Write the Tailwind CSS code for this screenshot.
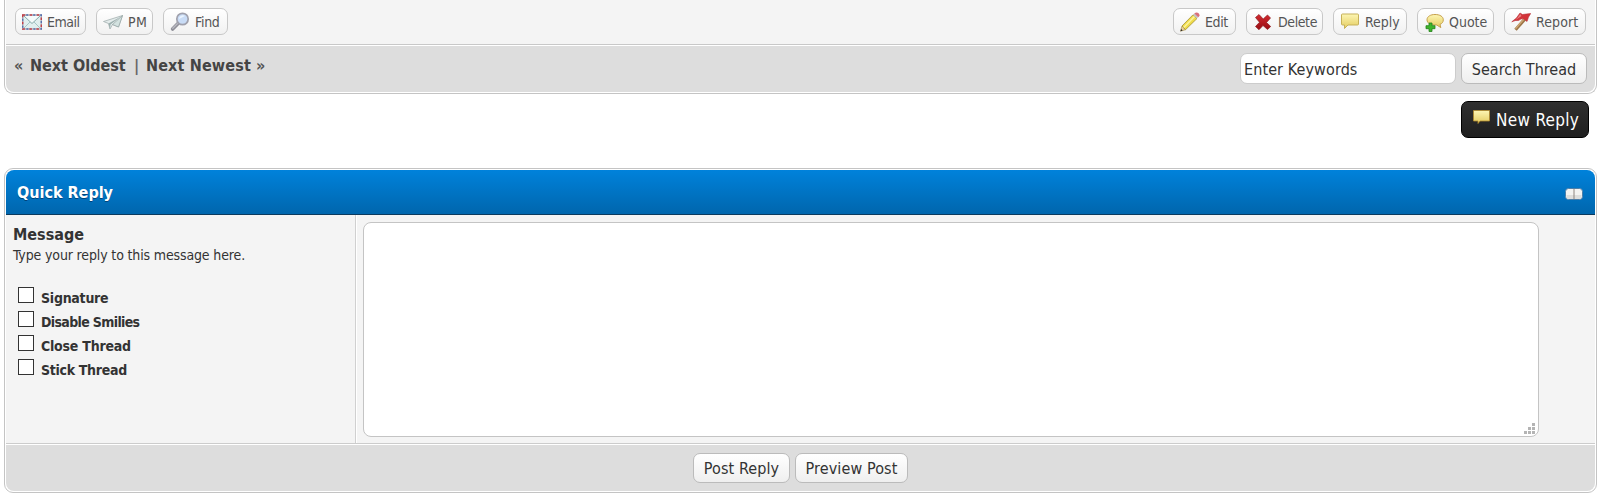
<!DOCTYPE html>
<html lang="en">
<head>
<meta charset="utf-8">
<title>Quick Reply</title>
<script src="https://cdn.jsdelivr.net/npm/@tailwindcss/browser@4"></script>
</head>
<body class="h-[502px] w-[1604px] overflow-hidden bg-white font-['DejaVu_Sans_Condensed','Noto_Sans',sans-serif] text-[#333]">
<svg width="0" height="0" class="absolute">
  <defs>
    <linearGradient id="yel" x1="0" y1="0" x2="0" y2="1"><stop offset="0" stop-color="#fdf6b4"/><stop offset="1" stop-color="#e3cb5e"/></linearGradient>
    <linearGradient id="red" x1="0" y1="0" x2="0" y2="1"><stop offset="0" stop-color="#d42a2f"/><stop offset="1" stop-color="#970d14"/></linearGradient>
  </defs>
</svg>

<!-- Post footer -->
<section class="ml-1 h-[94px] w-[1593px] rounded-b-[9px] border border-t-0 border-[#c4c4c4] bg-white px-px pb-px">
  <div class="flex h-[44px] justify-between bg-[#f4f4f4] px-[9px] pt-2 text-[14px] text-[#555]">
    <div class="flex gap-[10px]">
      <a class="flex h-[27px] w-[71px] items-center gap-[5px] whitespace-nowrap rounded-[7px] border border-[#c8c8c8] bg-linear-to-b from-white to-[#f1f1f1] pl-[6px] tracking-[-0.5px]">
        <svg class="h-5 w-5 shrink-0" viewBox="0 0 20 20"><rect x=".7" y="3" width="18.600" height="14" fill="#e0efef" stroke="#a9adba" stroke-width="1.400"/><rect x=".7" y="3" width="18.600" height="14" fill="none" stroke="#c43f47" stroke-width="1.400" stroke-dasharray="2.5 4.500"/><rect x=".7" y="3" width="18.600" height="14" fill="none" stroke="#5570ad" stroke-width="1.400" stroke-dasharray="2 5" stroke-dashoffset="-3.5"/><path d="M2 16l6-6M18 16l-6-6" stroke="#a5c5c5" fill="none"/><path d="M2 4l8 7.500L18 4" fill="#f5fbfb" stroke="#86aaaa"/></svg><span class="pt-px">Email</span></a>
      <a class="flex h-[27px] w-[57px] items-center gap-[5px] whitespace-nowrap rounded-[7px] border border-[#c8c8c8] bg-linear-to-b from-white to-[#f1f1f1] pl-[6px] tracking-[0.3px]">
        <svg class="h-5 w-5 shrink-0" viewBox="0 0 20 20"><path d="M.5 9.500L19.500 3.500L15.500 15L9.500 12.500L7 17L5.500 11.500z" fill="#e4ecec" stroke="#a3b0b0" stroke-width=".8" stroke-linejoin="round"/><path d="M5.500 11.500L18 4.500L7.500 12.500L7 17z" fill="#9db0af"/><path d="M9.500 12.500L19.500 3.500L15.500 15z" fill="#d3e2e0" stroke="#8b9b9b" stroke-width=".6"/></svg><span class="pt-px">PM</span></a>
      <a class="flex h-[27px] w-[65px] items-center gap-[5px] whitespace-nowrap rounded-[7px] border border-[#c8c8c8] bg-linear-to-b from-white to-[#f1f1f1] pl-[6px] tracking-[-0.3px]">
        <svg class="h-5 w-5 shrink-0" viewBox="0 0 20 20"><path d="M8 11.500L2.600 17" stroke="#8f8f98" stroke-width="3.600" stroke-linecap="round"/><path d="M7.500 11.500L2.800 16.200" stroke="#b9b9c1" stroke-width="1.400" stroke-linecap="round"/><circle cx="12.500" cy="7" r="5.700" fill="#c9dcf6" stroke="#a0a1ad" stroke-width="1.700"/><path d="M9 7a3.800 3.800 0 0 1 6-3z" fill="#eaf4ff"/></svg><span class="pt-px">Find</span></a>
    </div>
    <div class="flex gap-[10px]">
      <a class="flex h-[27px] w-[63px] items-center gap-[5px] whitespace-nowrap rounded-[7px] border border-[#c8c8c8] bg-linear-to-b from-white to-[#f1f1f1] pl-[6px] tracking-[-0.4px]">
        <svg class="h-5 w-5 shrink-0" viewBox="0 0 20 20"><path d="M.5 19.200L2 14L5.500 17.700z" fill="#e8cfa0" stroke="#9a8140" stroke-width=".6"/><path d="M.5 19.200L1.200 17L2.600 18.500z" fill="#222"/><path d="M2 14L13 2.800L17 6.500L5.500 17.700z" fill="#f0dc4a" stroke="#a59032" stroke-width=".8"/><path d="M3.800 15.500L14.500 4.500" stroke="#fbf3a0" stroke-width="1.500"/><path d="M13 2.800L14.500 1.400L18.400 5L17 6.500z" fill="#c3c3c3"/><path d="M14.300 1.600Q16.500-.6 18.600 1.300Q20.500 3.400 18.300 5.200z" fill="#d9707a"/></svg><span class="pt-px">Edit</span></a>
      <a class="flex h-[27px] w-[77px] items-center gap-[5px] whitespace-nowrap rounded-[7px] border border-[#c8c8c8] bg-linear-to-b from-white to-[#f1f1f1] pl-[6px] tracking-[-0.4px]">
        <svg class="h-5 w-5 shrink-0" viewBox="0 0 20 20"><path d="M2.500 5.500L6 2.500L10.200 7L14.500 3L17.500 6L13.500 10.500L17.700 14.500L14.500 17.500L10 13.500L6 17.700L2.500 14.500L6.500 10.300z" fill="url(#red)" stroke="#8c1a1e" stroke-width=".7" stroke-linejoin="round"/></svg><span class="pt-px">Delete</span></a>
      <a class="flex h-[27px] w-[74px] items-center gap-[5px] whitespace-nowrap rounded-[7px] border border-[#c8c8c8] bg-linear-to-b from-white to-[#f1f1f1] pl-[6px]">
        <svg class="h-5 w-5 shrink-0" viewBox="0 0 20 20"><path d="M2.500 2h15q1 0 1 1v9q0 1-1 1h-9.500L4.500 16.500v-3.500h-2q-1 0-1-1v-9q0-1 1-1z" fill="url(#yel)" stroke="#c6b15a"/></svg><span class="pt-px">Reply</span></a>
      <a class="flex h-[27px] w-[77px] items-center gap-[5px] whitespace-nowrap rounded-[7px] border border-[#c8c8c8] bg-linear-to-b from-white to-[#f1f1f1] pl-[6px]">
        <svg class="h-5 w-5 shrink-0" viewBox="0 0 20 20"><path d="M11 2.500c4.800 0 8.300 2 8.300 5.300c0 2.300-1.300 3.800-3.300 4.600l.8 3.200l-4-2.600c-5.500.2-9.800-1.600-9.800-5.200c0-3.300 3.500-5.300 8-5.300z" fill="url(#yel)" stroke="#c6a04c"/><path d="M5 11h3v2.700h3v3h-3v2.800H5v-2.800H2v-3h3z" fill="#3fb52c" stroke="#23821a" stroke-width=".8"/></svg><span class="pt-px">Quote</span></a>
      <a class="flex h-[27px] w-[82px] items-center gap-[5px] whitespace-nowrap rounded-[7px] border border-[#c8c8c8] bg-linear-to-b from-white to-[#f1f1f1] pl-[6px] tracking-[0.1px]">
        <svg class="h-5 w-5 shrink-0" viewBox="0 0 20 20"><path d="M4.500 17.800L14 7" stroke="#9b7446" stroke-width="3.200"/><path d="M4.500 16.800L13.500 6.500" stroke="#cda673" stroke-width="1.400"/><path d="M9 1L11.500 2.500L19.700 1.500Q17 5 16 9.500L13 7Q10 6 7.500 8.500Q4.500 8 .8 9.800Q6 6.500 9 1z" fill="#d3343a" stroke="#b8333a" stroke-width=".6" stroke-linejoin="round"/><path d="M9.300 2L10.500 4L4.500 8Q7.500 5 9.300 2z" fill="#e98384"/></svg><span class="pt-px">Report</span></a>
    </div>
  </div>
  <div class="h-px bg-[#c8c8c8]"></div>
  <div class="mt-px flex h-[46px] justify-between rounded-b-[8px] bg-[#ddd] pl-[8px] pr-[8px]">
    <div class="flex h-[40px] items-center whitespace-pre text-[16px] font-bold text-[#444]"><span class="w-[16px] text-[#555]">«</span><span class="w-[104px]">Next Oldest</span><span class="w-[12px] text-[#666]">|</span><span class="w-[110px] tracking-[0.15px]">Next Newest</span><span class="text-[#555]">»</span></div>
    <div class="flex gap-[5px] pt-[7px] text-[16px]">
      <div class="flex h-[31px] w-[216px] items-center rounded-[7px] border border-[#ccc] bg-white pl-[3px] pt-[2px] tracking-[0.1px]">Enter Keywords</div>
      <button class="flex h-[31px] w-[126px] items-center justify-center rounded-[7px] border border-[#bbb] bg-linear-to-b from-white to-[#efefef] pt-[2px]">Search Thread</button>
    </div>
  </div>
</section>

<div class="flex h-[74px] justify-end pr-[15px] pt-[7px]">
  <a class="flex h-[37px] w-[128px] items-center gap-[6px] whitespace-nowrap rounded-[7px] border border-black bg-linear-to-b from-[#303030] to-[#1f1f1f] pl-[11px] text-[17px] tracking-[0.3px] text-white">
    <svg class="mb-[5px] h-[14px] w-[17px] shrink-0" viewBox="0 0 17 14"><path d="M.5 .5h16v10.500H7L5 13.500V11H.5z" fill="url(#yel)" stroke="#b18a2c" stroke-width=".8"/></svg><span class="pt-[2px]">New Reply</span></a>
</div>

<!-- Quick reply -->
<section class="ml-1 flex h-[325px] w-[1593px] flex-col rounded-[9px] border border-[#c4c4c4] bg-white p-px">
  <header class="flex h-[45px] shrink-0 items-center justify-between rounded-t-[8px] border-b border-[#0b3a5e] bg-linear-to-b from-[#0082db] to-[#0066ad] pl-[11px] pr-[12px]">
    <h2 class="pt-[2px] text-[16px] font-bold text-white [text-shadow:0_1px_0_#00437a]">Quick Reply</h2>
    <svg class="mt-[3px] h-[12px] w-[18px]" viewBox="0 0 18 12"><rect x=".5" y=".5" width="17" height="11" rx="3" fill="#f3f3f1" stroke="#4d7fa8"/><path d="M1.500 7h15v2q0 2-2 2h-11q-2 0-2-2z" fill="#dededc"/><path d="M9 1v10" stroke="#8e8680"/></svg>
  </header>
  <div class="flex h-[229px] shrink-0 border-b border-[#ccc] bg-[#f4f4f4]">
    <div class="w-[350px] shrink-0 border-r border-[#d0d0d0] pl-[6px] pt-[9px]">
      <div class="pl-px text-[16px] font-bold leading-[22px]">Message</div>
      <div class="whitespace-nowrap pl-px text-[14px] leading-[19px] tracking-[-0.14px]">Type your reply to this message here.</div>
      <div class="mt-[20px] text-[14px] font-bold">
        <label class="flex h-6"><span class="ml-[6px] mt-[2px] h-4 w-4 border border-[#333] bg-white"></span><span class="ml-[7px] pt-[1px] leading-[24px] tracking-[-0.25px]">Signature</span></label>
        <label class="flex h-6"><span class="ml-[6px] mt-[2px] h-4 w-4 border border-[#333] bg-white"></span><span class="ml-[7px] pt-[1px] leading-[24px] tracking-[-0.65px]">Disable Smilies</span></label>
        <label class="flex h-6"><span class="ml-[6px] mt-[2px] h-4 w-4 border border-[#333] bg-white"></span><span class="ml-[7px] pt-[1px] leading-[24px] tracking-[-0.22px]">Close Thread</span></label>
        <label class="flex h-6"><span class="ml-[6px] mt-[2px] h-4 w-4 border border-[#333] bg-white"></span><span class="ml-[7px] pt-[1px] leading-[24px] tracking-[-0.3px]">Stick Thread</span></label>
      </div>
    </div>
    <div class="grow border-l border-white pl-[6px] pt-[7px]">
      <div class="flex h-[215px] w-[1176px] items-end justify-end rounded-[8px] border border-[#c4c4c4] bg-white pb-[2px] pr-[3px]">
        <svg class="h-[11px] w-[11px]" viewBox="0 0 11 11" fill="#b4b4b4"><path d="M8 0h3v3H8zM4 4h3v3H4zM8 4h3v3H8zM0 8h3v3H0zM4 8h3v3H4zM8 8h3v3H8z"/></svg>
      </div>
    </div>
  </div>
  <footer class="mt-px flex grow justify-center gap-[5px] rounded-b-[8px] bg-[#ddd] pt-2 text-[16px]">
    <button class="h-[30px] w-[97px] whitespace-nowrap rounded-[7px] border border-[#bbb] bg-linear-to-b from-white to-[#efefef] pt-[2px] tracking-[0.1px]">Post Reply</button>
    <button class="h-[30px] w-[113px] whitespace-nowrap rounded-[7px] border border-[#bbb] bg-linear-to-b from-white to-[#efefef] pt-[2px] tracking-[0.1px]">Preview Post</button>
  </footer>
</section>
</body>
</html>
